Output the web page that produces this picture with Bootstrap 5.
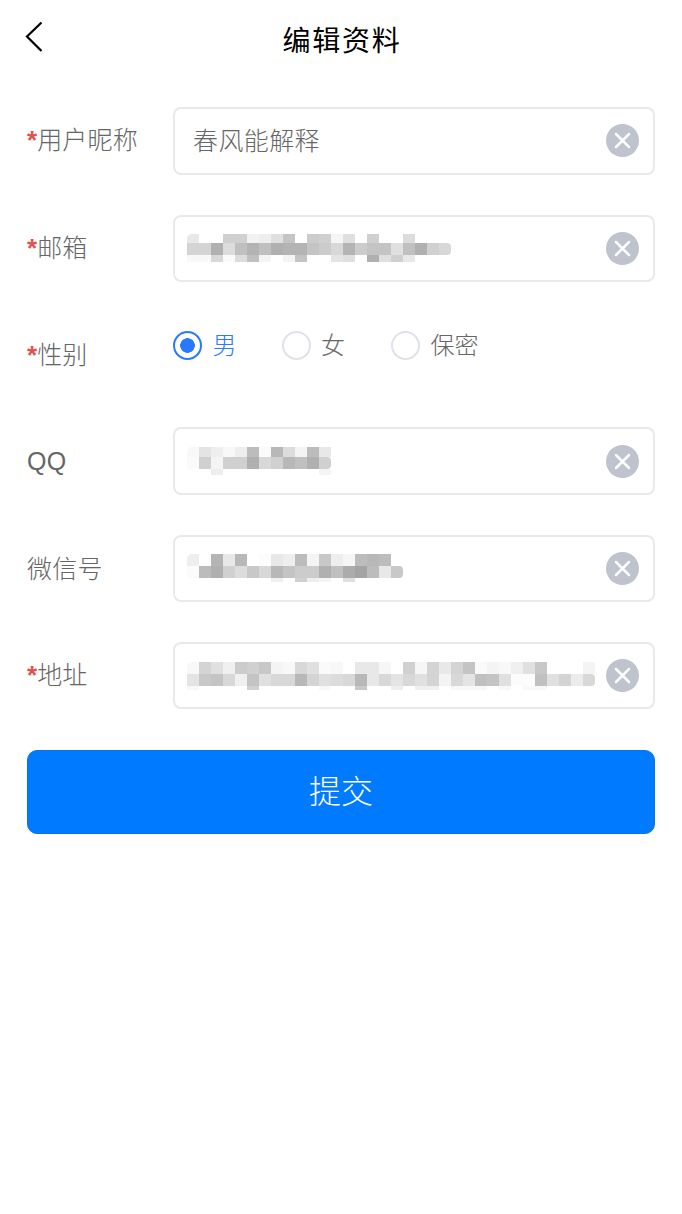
<!DOCTYPE html>
<html lang="zh-CN">
<head>
  <meta charset="UTF-8">
  <title>编辑资料</title>
  <link href="https://cdn.jsdelivr.net/npm/bootstrap@5.3.0/dist/css/bootstrap.min.css" rel="stylesheet">
  <style>
    body { font-family: "Noto Sans CJK SC", "Liberation Sans", sans-serif; background: #fff; color: #666; }
    .top-bar { height: 80px; padding: 0 25px 6px; }
    .top-side { flex: 1 1 0; }
    .top-title { font-size: 28px; letter-spacing: 1.8px; color: #000; font-weight: 400; margin: 0; padding: 6px 0 0 2px; }
    .edit-form { padding: 27.3px 27px 0; }
    .form-line { margin-bottom: 40px; }
    .form-line-last { margin-bottom: 40.6px; }
    .line-label { width: 146px; flex: none; font-size: 25px; line-height: 32px; font-weight: 300; color: #666; letter-spacing: .2px; padding-bottom: 3px; }
    .req-star { color: #e5504f; font-family: "Liberation Sans", sans-serif; font-weight: 700; font-size: 26px; letter-spacing: 0; }
    .qq-label { font-family: "Liberation Sans", sans-serif; font-weight: 400; padding-bottom: 0; }
    .gender-label { padding-top: 8px; }
    .input-box { height: 67.3px; border: 2px solid #e9e9ec; border-radius: 8px; padding: 0 14px 0 12px; }
    .name-input { font-size: 25px; font-weight: 300; color: #666; padding: 0 0 2px 6px; letter-spacing: .4px; box-shadow: none !important; }
    .clear-btn { width: 33px; height: 33px; flex: none; padding: 0; border: 0; background: none; line-height: 0; }
    .mosaic-strip { width: 408px; overflow: hidden; }
    .mosaic-row { display: flex; width: fit-content; overflow: hidden; }
    .mosaic-row:first-child { border-top-left-radius: 5px; }
    .mosaic-row:nth-child(2) { border-radius: 0 4px 4px 0; }
    .mosaic-cell { width: 12px; flex: none; }
    .gender-line { height: 65.6px; padding-top: 7px; }
    .gender-option { font-size: 24px; font-weight: 300; line-height: 29px; color: #666; margin: 0; padding: 0; min-height: 0; gap: 10.5px; }
    .gender-option span { padding-bottom: 4px; }
    .gender-option .form-check-input { float: none; width: 29px; height: 29px; margin: 0; border: 2px solid #dfe2e9; box-shadow: none; }
    .gender-option .form-check-input:checked { border-color: #2979ff; background-color: #fff; background-image: radial-gradient(circle, #2979ff 7px, transparent 7.6px); }
    .gender-picked { color: #2979ff; }
    .gender-gap-a { margin-right: 45px; }
    .gender-gap-b { margin-right: 46px; }
    .submit-btn { height: 84px; font-size: 32px; font-weight: 300; background: #007aff; border-color: #0a74e6; border-radius: 10px; padding-bottom: 12px; }
  </style>
</head>
<body>
  <header class="top-bar d-flex align-items-center">
    <div class="top-side">
      <svg width="18" height="32" viewBox="0 0 18 32" class="d-block" aria-label="返回">
        <path d="M16.5 1.5 2 15.5 16.5 30" fill="none" stroke="#000" stroke-width="2.2"/>
      </svg>
    </div>
    <h1 class="top-title">编辑资料</h1>
    <div class="top-side"></div>
  </header>

  <form class="edit-form">
    <div class="form-line d-flex align-items-center">
      <div class="line-label"><span class="req-star">*</span>用户昵称</div>
      <div class="input-box d-flex align-items-center flex-grow-1">
        <input type="text" class="form-control border-0 name-input" value="春风能解释">
        <button type="button" class="clear-btn"></button>
      </div>
    </div>

    <div class="form-line d-flex align-items-center">
      <div class="line-label"><span class="req-star">*</span>邮箱</div>
      <div class="input-box d-flex align-items-center justify-content-between flex-grow-1">
        <div class="mosaic-strip" data-mosaic="email"></div>
        <button type="button" class="clear-btn"></button>
      </div>
    </div>

    <div class="form-line gender-line d-flex align-items-start">
      <div class="line-label gender-label"><span class="req-star">*</span>性别</div>
      <div class="d-flex">
        <label class="form-check gender-option gender-gap-a d-flex align-items-center">
          <input class="form-check-input" type="radio" name="gender" checked>
          <span class="gender-picked">男</span>
        </label>
        <label class="form-check gender-option gender-gap-b d-flex align-items-center">
          <input class="form-check-input" type="radio" name="gender">
          <span>女</span>
        </label>
        <label class="form-check gender-option d-flex align-items-center">
          <input class="form-check-input" type="radio" name="gender">
          <span>保密</span>
        </label>
      </div>
    </div>

    <div class="form-line d-flex align-items-center">
      <div class="line-label qq-label">QQ</div>
      <div class="input-box d-flex align-items-center justify-content-between flex-grow-1">
        <div class="mosaic-strip" data-mosaic="qq"></div>
        <button type="button" class="clear-btn"></button>
      </div>
    </div>

    <div class="form-line d-flex align-items-center">
      <div class="line-label">微信号</div>
      <div class="input-box d-flex align-items-center justify-content-between flex-grow-1">
        <div class="mosaic-strip" data-mosaic="wechat"></div>
        <button type="button" class="clear-btn"></button>
      </div>
    </div>

    <div class="form-line form-line-last d-flex align-items-center">
      <div class="line-label"><span class="req-star">*</span>地址</div>
      <div class="input-box d-flex align-items-center justify-content-between flex-grow-1">
        <div class="mosaic-strip" data-mosaic="address"></div>
        <button type="button" class="clear-btn"></button>
      </div>
    </div>

    <button type="button" class="btn btn-primary submit-btn w-100">提交</button>
  </form>

  <script>
    // Masked values: each row is [height, gray shades as hex pairs]
    const masked = {
      email: [
        [9, "e8 ff ff d0 d0 f2 ee e0 c4 ff cc d0 f5 e0 ff d0 ff ff dc"],
        [12, "d4 d4 b0 dc c0 b4 c0 b0 b4 b4 c4 cc d8 b4 cc c4 c4 e0 c0 b0 d0 d8"],
        [7, "f8 f8 d8 fa dc c0 f4 ff f4 c4 ff ff e4 e0 ff b0 e0 d0 e8"]
      ],
      qq: [
        [10, "f8 e4 ee f8 ee bc fa b8 dc f4 bc e8"],
        [12, "fa d0 f4 d0 d0 b0 d8 d0 b8 c0 b0 d0"],
        [6, "ff ff ee ff ff ff ff ff ff ff ff f4"]
      ],
      wechat: [
        [12, "ee ff b4 e8 b8 ff fc e8 ee bc f4 c8 ee f6 bc b8 bc"],
        [12, "fb bc b0 d0 dc c8 d8 b8 c4 cc cc b0 c0 ac a4 bc e8 c8"],
        [4, "ff ff ff ff ff ff ff f0 ff d0 ee f4 ff e0"]
      ],
      address: [
        [12, "f8 d4 e0 f0 cc d0 c8 f4 f8 d8 e0 fa f8 ff e8 e8 f6 ff d0 f6 d4 e8 d4 c4 fa f4 f8 f0 e0 c8 ff ff ff f4"],
        [12, "e4 c8 c4 d8 f0 c4 e0 d8 d8 b8 d4 e0 dc d8 b8 e8 d8 e4 d8 e0 d4 f4 d8 e4 c0 c4 e0 fc fc c0 e0 d4 ec d8"],
        [4, "f8 ff ff ff ff d0 ff ff ff ff ff f8 ff ff c8 ff ff ee ff f0 f0 ff f8 f8 f8 ff f8 ff f8 f8"]
      ]
    };

    document.querySelectorAll("[data-mosaic]").forEach(strip => {
      masked[strip.dataset.mosaic].forEach(([height, shades]) => {
        const row = document.createElement("div");
        row.className = "mosaic-row";
        shades.split(" ").forEach(shade => {
          const cell = document.createElement("div");
          cell.className = "mosaic-cell";
          cell.style.height = height + "px";
          cell.style.background = "#" + shade + shade + shade;
          row.appendChild(cell);
        });
        strip.appendChild(row);
      });
    });

    // Same clear icon in every input
    document.querySelectorAll(".clear-btn").forEach(btn => {
      btn.innerHTML = `<svg width="33" height="33" viewBox="0 0 33 33">
        <circle cx="16.5" cy="16.5" r="16.5" fill="#bfc3cd"/>
        <path d="M10 10 23 23M23 10 10 23" stroke="#fff" stroke-width="2.5" stroke-linecap="round" fill="none"/>
      </svg>`;
    });
  </script>
  <script src="https://cdn.jsdelivr.net/npm/bootstrap@5.3.0/dist/js/bootstrap.bundle.min.js"></script>
</body>
</html>
